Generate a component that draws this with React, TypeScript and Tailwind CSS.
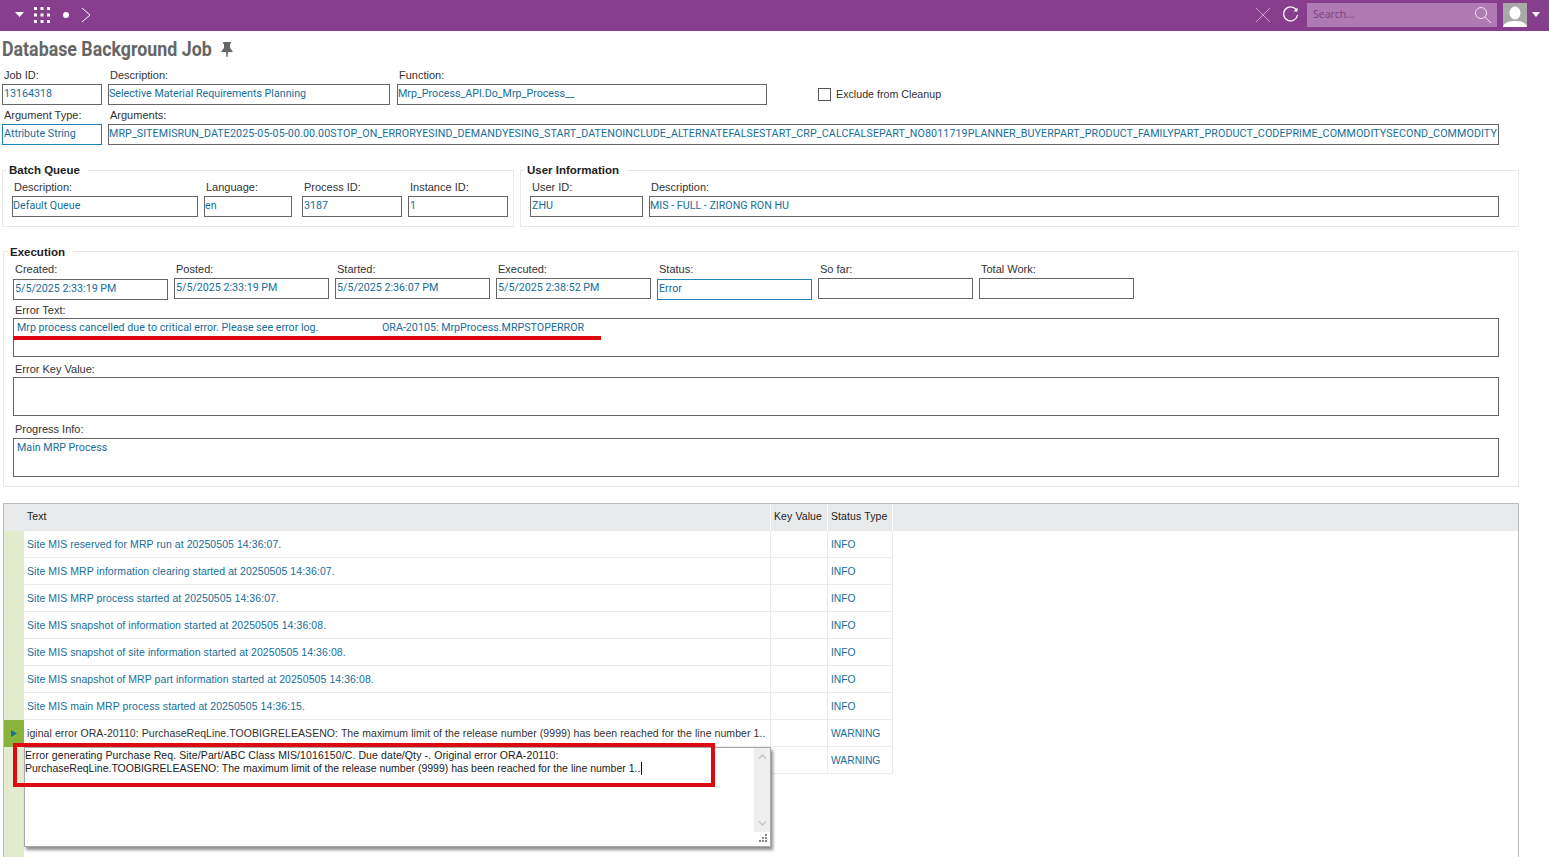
import type { ReactNode } from "react";

const FORM_FONT = "font-['Liberation_Sans',Arial,sans-serif]";
const VALUE_FONT = "font-['Roboto',sans-serif] text-[10.7px]";

type FieldProps = {
  label: string;
  value?: string;
  width: string;
  labelClass?: string;
  inputClass?: string;
  active?: boolean;
};

function Field({ label, value, width, labelClass = "pl-[2px]", inputClass = "px-[1px]", active }: FieldProps) {
  return (
    <div className={`${width} shrink-0`}>
      <div className={`h-[15px] text-[11px] leading-[13px] text-[#333] whitespace-nowrap ${labelClass}`}>{label}</div>
      <div
        className={`h-[21px] border overflow-hidden whitespace-nowrap leading-[17px] text-[#176e9a] ${VALUE_FONT} ${
          active ? "border-[#1f82b8]" : "border-[#666]"
        } ${inputClass}`}
      >
        {value}
      </div>
    </div>
  );
}

function Group({
  title,
  className,
  titleClass = "top-[-8px]",
  children,
}: {
  title: string;
  className: string;
  titleClass?: string;
  children: ReactNode;
}) {
  return (
    <div className={`relative border border-[#e8e8e8] ${className}`}>
      <span className={`absolute left-[4px] bg-white px-[2px] text-[11.5px] leading-[14px] font-bold text-[#222] pr-2 ${titleClass}`}>
        {title}
      </span>
      {children}
    </div>
  );
}

function AreaField({ label, value, mb, labelLeading = "leading-[17px]" }: { label: string; value?: ReactNode; mb: string; labelLeading?: string }) {
  return (
    <div className={mb}>
      <div className={`h-[16px] pl-[2px] text-[11px] text-[#333] ${labelLeading}`}>{label}</div>
      <div className={`h-[39px] w-[1486px] border border-[#666] px-[3px] pt-[1px] leading-[15px] text-[#176e9a] whitespace-pre ${VALUE_FONT}`}>
        {value}
      </div>
    </div>
  );
}

const rows = [
  { text: "Site MIS reserved for MRP run at 20250505 14:36:07.", status: "INFO" },
  { text: "Site MIS MRP information clearing started at 20250505 14:36:07.", status: "INFO" },
  { text: "Site MIS MRP process started at 20250505 14:36:07.", status: "INFO" },
  { text: "Site MIS snapshot of information started at 20250505 14:36:08.", status: "INFO" },
  { text: "Site MIS snapshot of site information started at 20250505 14:36:08.", status: "INFO" },
  { text: "Site MIS snapshot of MRP part information started at 20250505 14:36:08.", status: "INFO" },
  { text: "Site MIS main MRP process started at 20250505 14:36:15.", status: "INFO" },
  {
    text: "iginal error ORA-20110: PurchaseReqLine.TOOBIGRELEASENO: The maximum limit of the release number (9999) has been reached for the line number 1..",
    status: "WARNING",
    current: true,
  },
  { text: "", status: "WARNING" },
];

function TopBar() {
  return (
    <div className="flex h-[31px] items-center bg-[#873f8d] pb-[2px] text-white">
      <svg width="9" height="5" viewBox="0 0 9 5" className="ml-[15px]">
        <path d="M0 0h9L4.500 5z" fill="#fff" />
      </svg>
      <svg width="16" height="16" viewBox="0 0 16 16" className="ml-[10px]" fill="#fff">
        {[0, 6.500, 13].map((x) =>
          [0, 6.500, 13].map((y) => <rect key={`${x}-${y}`} x={x} y={y} width="3" height="3" />)
        )}
      </svg>
      <span className="ml-[13px] h-[6px] w-[6px] rounded-full bg-white" />
      <svg width="10" height="16" viewBox="0 0 10 16" className="ml-[12px]" fill="none" stroke="#fff" strokeWidth="1">
        <path d="M1 1l8 7-8 7" />
      </svg>
      <svg width="16" height="16" viewBox="0 0 16 16" className="ml-auto" fill="none" stroke="#c79fca" strokeWidth="1">
        <path d="M1 1l14 14M15 1L1 15" />
      </svg>
      <svg width="17" height="17" viewBox="0 0 17 17" className="ml-[11px]" fill="none" stroke="#fff" strokeWidth="1.300">
        <path d="M14 3.500A7 7 0 1 0 15.500 9" />
        <path d="M11.500 5.500h4v-4z" fill="#fff" stroke="none" />
      </svg>
      <div className="ml-[8px] flex h-[24px] w-[190px] items-center justify-between bg-[#b07ab4] pl-[6px] pr-[5px]">
        <span className="pt-[1px] font-['Open_Sans',sans-serif] text-[10.5px] text-[#7a3f80]">Search...</span>
        <svg width="18" height="18" viewBox="0 0 18 18" fill="none" stroke="#f1e4f2" strokeWidth="1">
          <circle cx="7" cy="7" r="5.500" />
          <path d="M11 11l6 6" />
        </svg>
      </div>
      <div className="ml-[6px] h-[24px] w-[24px] overflow-hidden bg-[#a9a9a9]">
        <svg width="24" height="24" viewBox="0 0 24 24" fill="#fff">
          <ellipse cx="12" cy="10" rx="5.500" ry="6.500" />
          <path d="M0 24c1-5 7-6 12-6s11 1 12 6z" />
        </svg>
      </div>
      <svg width="8" height="5" viewBox="0 0 8 5" className="ml-[5px] mr-[9px]">
        <path d="M0 0h8L4 5z" fill="#fff" />
      </svg>
    </div>
  );
}

function LogTable() {
  return (
    <div className="ml-[3px] mt-[16px] h-[400px] w-[1516px] border border-[#bdbdbd] font-['Liberation_Sans',Arial,sans-serif] text-[10.500px] tracking-[0.07px]">
      <div className="flex h-[27px] bg-[#e9eaec] leading-[25px] text-[#222]">
        <div className="w-[20px]" />
        <div className="w-[746px] pl-[3px]">Text</div>
        <div className="w-[57px] border-l border-white pl-[3px] whitespace-nowrap tracking-[0.1px]">Key Value</div>
        <div className="w-[66px] border-x border-white pl-[3px] whitespace-nowrap tracking-[0.1px]">Status Type</div>
      </div>
      <div className="flex h-[373px]">
        <div className="w-[20px] bg-[#e3ebcd]">
          <div className="mt-[189px] flex h-[27px] items-center justify-center bg-[#8ab33c]">
            <svg width="6" height="7" viewBox="0 0 6 7">
              <path d="M0 0l6 3.500L0 7z" fill="#176e9a" />
            </svg>
          </div>
        </div>
        <div>
          {rows.map((r, i) => (
            <div key={i} className="flex h-[27px] border-b border-[#ebebeb] leading-[26px]">
              <div className={`w-[746px] overflow-hidden whitespace-nowrap pl-[3px] ${r.current ? "text-[#333]" : "text-[#176e9a]"}`}>
                {r.text}
              </div>
              <div className="w-[57px] border-l border-[#ebebeb]" />
              <div className="w-[66px] border-x border-[#ebebeb] pl-[3px] pt-[1px] text-[10.3px] text-[#176e9a] tracking-normal">{r.status}</div>
            </div>
          ))}
        </div>
      </div>
    </div>
  );
}

function CellPopup() {
  return (
    <div className="absolute left-[24px] top-[747px] flex h-[100px] w-[747px] border border-[#a8a8a8] bg-white shadow-[2px_3px_3px_rgba(0,0,0,0.45)]">
      <div className="flex-1 pt-[1px] text-[10.5px] leading-[13px] text-[#222]">
        <span className="tracking-[0.1px]">
          Error generating Purchase Req. Site/Part/ABC Class MIS/1016150/C. Due date/Qty -. Original error ORA-20110:
        </span>
        <br />
        <span className="inline-block border-r border-black pr-[1px]">
          PurchaseReqLine.TOOBIGRELEASENO: The maximum limit of the release number (9999) has been reached for the line number 1..
        </span>
      </div>
      <div className="flex h-[84px] w-[16px] flex-col items-center justify-between bg-[#eeeeee] py-[6px]">
        <svg width="9" height="5" viewBox="0 0 9 5" fill="none" stroke="#c4c4c4" strokeWidth="1.500">
          <path d="M1 4.500l3.500-3.500 3.500 3.500" />
        </svg>
        <svg width="9" height="5" viewBox="0 0 9 5" fill="none" stroke="#c4c4c4" strokeWidth="1.500">
          <path d="M1 .5l3.500 3.500L8 .5" />
        </svg>
      </div>
      <svg width="12" height="12" viewBox="0 0 12 12" className="absolute bottom-[1px] right-[1px]" fill="#888">
        <rect x="8" y="1" width="2" height="2" />
        <rect x="5" y="4" width="2" height="2" />
        <rect x="8" y="4" width="2" height="2" />
        <rect x="2" y="7" width="2" height="2" />
        <rect x="5" y="7" width="2" height="2" />
        <rect x="8" y="7" width="2" height="2" />
      </svg>
    </div>
  );
}

export default function App() {
  return (
    <div className={`relative h-[857px] w-[1549px] overflow-hidden bg-white ${FORM_FONT}`}>
      <TopBar />

      <div className="flex h-[38px] items-center pb-[3px] pl-[2px]">
        <h1 className="origin-left scale-x-[0.89] font-['Roboto',sans-serif] text-[20px] font-bold leading-[36px] whitespace-nowrap text-[#666]">
          Database Background Job
        </h1>
        <svg width="12" height="15" viewBox="0 0 12 15" className="ml-[-17px] mt-[2px]" fill="#666">
          <path d="M2 0h8v1.500L9 2v4l2.500 3v1H7l-.5 5h-1L5 10H.5V9L3 6V2l-1-.5z" />
        </svg>
      </div>

      <div className="flex gap-[6px] pl-[2px]">
        <Field label="Job ID:" value="13164318" width="w-[100px]" />
        <Field label="Description:" value="Selective Material Requirements Planning" width="w-[282px]" inputClass="px-0" />
        <div className="ml-[1px]">
          <Field label="Function:" value="Mrp_Process_API.Do_Mrp_Process__" width="w-[370px]" inputClass="px-0" />
        </div>
        <label className="ml-[45px] mt-[18px] flex h-[14px] items-center text-[10.7px] text-[#333]">
          <span className="mr-[5px] h-[13px] w-[13px] border border-[#555]" />
          Exclude from Cleanup
        </label>
      </div>

      <div className="mt-[4px] flex gap-[6px] pl-[2px]">
        <Field label="Argument Type:" value="Attribute String" width="w-[100px]" active />
        <Field
          label="Arguments:"
          value="MRP_SITEMISRUN_DATE2025-05-05-00.00.00STOP_ON_ERRORYESIND_DEMANDYESING_START_DATENOINCLUDE_ALTERNATEFALSESTART_CRP_CALCFALSEPART_NO8011719PLANNER_BUYERPART_PRODUCT_FAMILYPART_PRODUCT_CODEPRIME_COMMODITYSECOND_COMMODITY"
          width="w-[1391px]"
          inputClass="px-0 tracking-[0.09px]"
        />
      </div>

      <div className="mt-[25px] flex gap-[6px] pl-[2px]">
        <Group title="Batch Queue" className="h-[57px] w-[512px]">
          <div className="flex gap-[6px] pl-[9px] pt-[10px]">
            <Field label="Description:" value="Default Queue" width="w-[186px]" inputClass="px-0" />
            <Field label="Language:" value="en" width="w-[88px]" inputClass="px-0" />
            <div className="ml-[4px]">
              <Field label="Process ID:" value="3187" width="w-[100px]" />
            </div>
            <Field label="Instance ID:" value="1" width="w-[100px]" />
          </div>
        </Group>
        <Group title="User Information" className="h-[57px] w-[999px]">
          <div className="flex gap-[6px] pl-[9px] pt-[10px]">
            <Field label="User ID:" value="ZHU" width="w-[113px]" />
            <Field label="Description:" value="MIS - FULL - ZIRONG RON HU" width="w-[850px]" inputClass="px-0" />
          </div>
        </Group>
      </div>

      <div className="mt-[24px] pl-[3px]">
        <Group title="Execution" titleClass="top-[-7px]" className="h-[236px] w-[1516px]">
          <div className="flex gap-[6px] pl-[9px] pt-[11px]">
            <Field label="Created:" value="5/5/2025 2:33:19 PM" width="w-[155px]" inputClass="mt-[1px] px-[1px]" />
            <Field label="Posted:" value="5/5/2025 2:33:19 PM" width="w-[155px]" />
            <Field label="Started:" value="5/5/2025 2:36:07 PM" width="w-[155px]" />
            <Field label="Executed:" value="5/5/2025 2:38:52 PM" width="w-[155px]" />
            <Field label="Status:" value="Error" width="w-[155px]" active inputClass="mt-[1px] px-[1px]" />
            <Field label="So far:" width="w-[155px]" />
            <Field label="Total Work:" width="w-[155px]" />
          </div>
          <div className="pl-[9px] pt-[2px]">
            <AreaField
              label="Error Text:"
              mb="mb-[4px]"
              value={
                <>
                  <span className="inline-block w-[365px]">Mrp process cancelled due to critical error. Please see error log.</span>
                  ORA-20105: MrpProcess.MRPSTOPERROR
                </>
              }
            />
            <AreaField label="Error Key Value:" mb="mb-[6px]" />
            <AreaField label="Progress Info:" mb="" labelLeading="leading-[15px]" value="Main MRP Process" />
          </div>
        </Group>
      </div>

      <LogTable />
      <CellPopup />

      {/* red marks drawn over the screenshot */}
      <div className="absolute left-[13px] top-[336px] h-[4px] w-[588px] bg-[#e0060c]" />
      <div className="absolute left-[13px] top-[743px] h-[44px] w-[702px] border-[4px] border-[#dd0a12]" />
    </div>
  );
}
